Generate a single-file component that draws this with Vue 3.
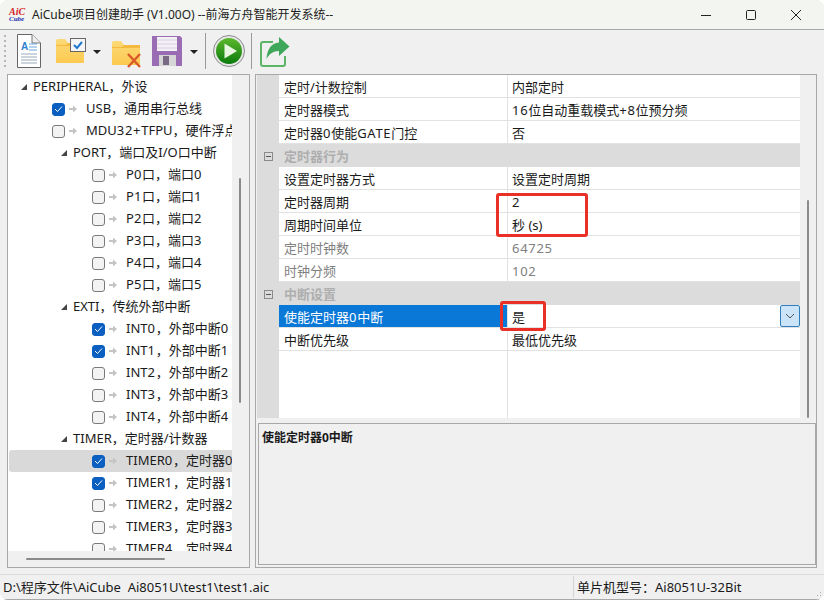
<script setup>
const C = '\uFF0C'
const tree = [
  { t: 'PERIPHERAL' + C + '外设', k: 'g0' },
  { t: 'USB' + C + '通用串行总线', k: 'i1', c: true },
  { t: 'MDU32+TFPU' + C + '硬件浮点运算', k: 'i1' },
  { t: 'PORT' + C + '端口及I/O口中断', k: 'g1' },
  { t: 'P0口' + C + '端口0', k: 'i2' },
  { t: 'P1口' + C + '端口1', k: 'i2' },
  { t: 'P2口' + C + '端口2', k: 'i2' },
  { t: 'P3口' + C + '端口3', k: 'i2' },
  { t: 'P4口' + C + '端口4', k: 'i2' },
  { t: 'P5口' + C + '端口5', k: 'i2' },
  { t: 'EXTI' + C + '传统外部中断', k: 'g1' },
  { t: 'INT0' + C + '外部中断0', k: 'i2', c: true },
  { t: 'INT1' + C + '外部中断1', k: 'i2', c: true },
  { t: 'INT2' + C + '外部中断2', k: 'i2' },
  { t: 'INT3' + C + '外部中断3', k: 'i2' },
  { t: 'INT4' + C + '外部中断4', k: 'i2' },
  { t: 'TIMER' + C + '定时器/计数器', k: 'g1' },
  { t: 'TIMER0' + C + '定时器0', k: 'i2', c: true, s: true },
  { t: 'TIMER1' + C + '定时器1', k: 'i2', c: true },
  { t: 'TIMER2' + C + '定时器2', k: 'i2' },
  { t: 'TIMER3' + C + '定时器3', k: 'i2' },
  { t: 'TIMER4' + C + '定时器4', k: 'i2' },
]
const props = [
  { n: '定时/计数控制', v: '内部定时' },
  { n: '定时器模式', v: '16位自动重载模式+8位预分频' },
  { n: '定时器0使能GATE门控', v: '否' },
  { g: '定时器行为' },
  { n: '设置定时器方式', v: '设置定时周期' },
  { n: '定时器周期', v: '2' },
  { n: '周期时间单位', v: '秒 (s)' },
  { n: '定时时钟数', v: '64725', dim: true },
  { n: '时钟分频', v: '102', dim: true },
  { g: '中断设置' },
  { n: '使能定时器0中断', v: '是', sel: true },
  { n: '中断优先级', v: '最低优先级' },
]
const chip = '单片机型号\uFF1AAi8051U-32Bit'
// Latin runs are set slightly wider than the fallback font
const runs = (s) => s.split(/([0-9A-Z+]+)/).filter(Boolean)
const isLatin = (s) => /^[0-9A-Z+]/.test(s)
const treeRuns = (s) => s.split(/([0-9+]+)/).filter(Boolean)
const isNum = (s) => /^[0-9+]/.test(s)
</script>

<template>
  <div class="win">
    <header class="title">
      <div class="logo"><span>AiC</span><span class="logo2">Cube</span></div>
      <div class="title-text">AiCube项目创建助手 (V1.00O) --前海方舟智能开发系统--</div>
      <div class="controls">
        <svg width="12" height="12" viewBox="0 0 12 12"><path d="M1 6.500H11" stroke="#222" fill="none"/></svg>
        <svg width="12" height="12" viewBox="0 0 12 12"><rect x="1.500" y="1.500" width="9" height="9" rx="1" stroke="#222" fill="none"/></svg>
        <svg width="12" height="12" viewBox="0 0 12 12"><path d="M1 1L11 11M11 1L1 11" stroke="#222" fill="none"/></svg>
      </div>
    </header>

    <nav class="toolbar">
      <div class="grip"></div>
      <svg class="ic doc" width="24" height="34" viewBox="0 0 24 34">
        <path d="M.5 .500H15L23.500 9V33.500H.5Z" fill="#fff" stroke="#666"/>
        <path d="M15 .500V9H23.500" fill="#eee" stroke="#777"/>
        <text x="4" y="16" font-size="10" font-weight="700" fill="#2f80d0" font-family="Liberation Sans">A</text>
        <path d="M12 10H20M12 13H20M12 16H20" stroke="#6aa5dd"/>
        <path d="M4 20H20M4 23H20M4 26H20M4 29H20" stroke="#9ab"/>
      </svg>
      <svg class="ic f1" width="31" height="26" viewBox="0 0 31 26">
        <path d="M0 3Q0 1 2 1H9L12 5H28V24Q28 25 27 25H1Q0 25 0 24Z" fill="url(#fd)"/>
        <path d="M0 8H28V5H12L10 7H0Z" fill="#f4b93e"/>
        <rect x="14.500" y=".5" width="15" height="13" fill="#f5f5f5" stroke="#666"/>
        <path d="M18 7L21 10L26 4" stroke="#1f78d1" stroke-width="2" fill="none"/>
        <defs><linearGradient id="fd" x1="0" y1="0" x2="0" y2="1"><stop offset="0" stop-color="#fbd977"/><stop offset="1" stop-color="#fcc94f"/></linearGradient></defs>
      </svg>
      <div class="drop d1"></div>
      <svg class="ic f2" width="30" height="28" viewBox="0 0 30 28">
        <path d="M0 3Q0 1 2 1H9L12 5H28V24Q28 25 27 25H1Q0 25 0 24Z" fill="url(#fd)"/>
        <path d="M0 8H28V5H12L10 7H0Z" fill="#f4b93e"/>
        <path d="M16 14L28 27M28 14L16 27" stroke="#d9592b" stroke-width="2.400" fill="none"/>
      </svg>
      <svg class="ic sv" width="30" height="30" viewBox="0 0 30 30">
        <path d="M0 0H28L30 2V30H0Z" fill="#9a6cb4"/>
        <rect x="5" y="1" width="20" height="14" fill="#f3f0f6"/>
        <path d="M5 4H25M5 8H25M5 12H25" stroke="#d8d0e0"/>
        <rect x="7" y="19" width="17" height="11" fill="#d6d6d6"/>
        <rect x="11" y="20" width="6" height="9" fill="#7b6a86"/>
      </svg>
      <div class="drop d2"></div>
      <div class="sep s1"></div>
      <svg class="ic run" width="32" height="32" viewBox="0 0 32 32">
        <circle cx="16" cy="16" r="15.500" fill="#e8e8e8" stroke="#8a8a8a"/>
        <circle cx="16" cy="16" r="13" fill="url(#gr)"/>
        <path d="M11.500 8.500L24 16L11.500 23.500Z" fill="#e8f5e0"/>
        <defs><linearGradient id="gr" x1="0" y1="0" x2="0" y2="1"><stop offset="0" stop-color="#5cb82c"/><stop offset="1" stop-color="#0a7a0c"/></linearGradient></defs>
      </svg>
      <div class="sep s2"></div>
      <svg class="ic sh" width="30" height="30" viewBox="0 0 30 30">
        <path d="M13 5H3Q1 5 1 7V27Q1 29 3 29H23Q25 29 25 27V19" fill="none" stroke="#5cb567" stroke-width="2"/>
        <path d="M19 0L29.500 9.500L19 19V14C13 14 9 17 6.500 22C7 13 11 6 19 5.500Z" fill="#3fa75a"/>
      </svg>
    </nav>

    <main class="body">
      <section class="tree-pane">
        <div class="tree-top">
          <div class="tree">
            <div v-for="r in tree" :key="r.t" class="row" :class="[r.k, { on: r.s }]">
              <i v-if="r.k[0] === 'g'" class="tri"></i>
              <template v-else>
                <span class="box" :class="{ checked: r.c }">
                  <svg v-if="r.c" width="9" height="8" viewBox="0 0 9 8"><path d="M1 4L3.500 6.500L8 1.500" stroke="#fff" fill="none"/></svg>
                </span>
                <svg class="arr" width="8" height="8" viewBox="0 0 8 8"><path d="M0 3H4V0.500L8 4L4 7.500V5H0Z" fill="#c4c4c4"/></svg>
              </template>
              <span class="lbl"><span v-for="(s, i) in treeRuns(r.t)" :key="i" :class="{ wide: isNum(s) }">{{ s }}</span></span>
            </div>
          </div>
          <div class="vbar"><div class="vthumb t1"></div></div>
        </div>
        <div class="hbar"><div class="hthumb"></div></div>
      </section>

      <section class="right-pane">
        <div class="grid-wrap">
          <div class="grid">
            <template v-for="p in props" :key="p.n || p.g">
              <div v-if="p.g" class="grow">
                <span class="minus"></span>
                <span class="gname">{{ p.g }}</span>
              </div>
              <div v-else class="prow" :class="{ dim: p.dim, sel: p.sel }">
                <div class="gut"></div>
                <div class="pn"><span v-for="(s, i) in runs(p.n)" :key="i" :class="{ wide: isLatin(s) }">{{ s }}</span></div>
                <div class="pv">
                  <span v-for="(s, i) in runs(p.v)" :key="i" :class="{ wide: isLatin(s) }">{{ s }}</span>
                  <span v-if="p.sel" class="combo"><svg width="10" height="6" viewBox="0 0 10 6"><path d="M1 1L5 5L9 1" stroke="#555" fill="none"/></svg></span>
                </div>
              </div>
            </template>
            <div class="prow fill"><div class="gut"></div><div class="pn"></div><div class="pv"></div></div>
            <div class="mark m1"></div>
            <div class="mark m2"></div>
          </div>
          <div class="vbar rb"><div class="vthumb t2"></div></div>
        </div>
        <div class="desc">使能定时器0中断</div>
      </section>
    </main>

    <footer class="status">
      <div class="st-l">D:\程序文件\AiCube&nbsp;&nbsp;Ai8051U\test1\test1.aic</div>
      <div class="st-r">{{ chip }}</div>
      <div class="sizer"></div>
    </footer>
  </div>
</template>

<style>
html, body { margin: 0; background: #fff; }
</style>

<style scoped>
.win {
  width: 824px; height: 600px; display: flex; flex-direction: column; overflow: hidden;
  background: #f0f0f0; color: #1a1a1a;
  font-family: "Noto Sans", "Noto Sans CJK SC", sans-serif; font-size: 13px; line-height: 18px;
  border-radius: 8px;
}
.title {
  height: 29px; flex: none; display: flex; align-items: center; background: #f3f5f0;
  border-bottom: 1px solid #a8a8a8; position: relative;
}
.logo { width: 32px; padding-left: 9px; box-sizing: border-box; display: flex; flex-direction: column; font-family: "Liberation Serif", serif; font-style: italic; font-weight: 700; color: #d3232a; font-size: 10px; line-height: 9px; }
.logo2 { color: #2230b0; font-size: 7px; line-height: 7px; }
.title-text { flex: 1; white-space: nowrap; color: #222; font-size: 12px; }
.controls { display: flex; gap: 33px; margin-right: 22px; }
.toolbar { height: 44px; flex: none; position: relative; background: #f0f0f0; }
.grip { position: absolute; left: 4px; top: 5px; width: 2px; height: 34px; background: repeating-linear-gradient(#b5b5b5 0 2px, transparent 2px 5px); }
.ic { position: absolute; }
.doc { left: 17px; top: 4px; }
.f1 { left: 56px; top: 8px; }
.f2 { left: 112px; top: 10px; }
.sv { left: 152px; top: 6px; }
.run { left: 213px; top: 5px; }
.sh { left: 260px; top: 7px; }
.drop { position: absolute; top: 20px; border: 4px solid transparent; border-top: 4px solid #222; border-bottom: 0; }
.d1 { left: 93px; }
.d2 { left: 190px; }
.sep { position: absolute; top: 3px; width: 1px; height: 36px; background: #9a9a9a; }
.s1 { left: 205px; }
.s2 { left: 251px; }
.body { flex: 1; min-height: 0; display: flex; gap: 5px; padding: 0 7px 6px 7px; }
.tree-pane {
  width: 243px; box-sizing: border-box; border: 1px solid #a8a8a8; display: flex; flex-direction: column; background: #f0f0f0;
}
.tree-top { flex: 1; min-height: 0; display: flex; overflow: hidden; }
.tree { flex: 1; min-width: 0; background: #fff; padding: 1px 0 0 1px; overflow: hidden; }
.row { height: 22px; display: flex; align-items: center; white-space: nowrap; position: relative; overflow: hidden; }
.row.on { background: #d9d9d9; border-radius: 3px 0 0 3px; }
.g0 { padding-left: 12px; }
.g1 { padding-left: 52px; }
.i1 { padding-left: 43px; }
.i2 { padding-left: 83px; }
.lbl { padding-bottom: 2px; }
.tri { width: 0; height: 0; border-style: solid; border-width: 0 0 6px 6px; border-color: transparent transparent #444 transparent; margin-right: 6px; flex: none; }
.box { width: 13px; height: 13px; box-sizing: border-box; border: 1px solid #7a7a7a; border-radius: 3px; background: #f3f3f3; flex: none; display: flex; align-items: center; justify-content: center; }
.box.checked { background: #0a5fc0; border-color: #0a5fc0; }
.arr { margin: 0 9px 0 4px; flex: none; }
.vbar { width: 17px; flex: none; background: #f0f0f0; position: relative; }
.rb { width: 16px; }
.vthumb { position: absolute; left: 7px; width: 2px; background: #8a8a8a; border-radius: 1px; }
.t1 { top: 103px; height: 225px; }
.t2 { top: 125px; height: 218px; }
.hbar { height: 16px; flex: none; position: relative; }
.hthumb { position: absolute; left: 18px; top: 7px; width: 139px; height: 2px; background: #8a8a8a; border-radius: 1px; }
.right-pane {
  flex: 1; min-width: 0; box-sizing: border-box; border: 1px solid #a8a8a8; display: flex; flex-direction: column; gap: 5px; padding-bottom: 2px;
}
.grid-wrap { height: 343px; flex: none; display: flex; overflow: hidden; }
.grid { flex: 1; min-width: 0; background: #fff; position: relative; margin-left: 1px; display: flex; flex-direction: column; }
.prow { height: 23px; flex: none; box-sizing: border-box; display: flex; border-bottom: 1px solid #e2e2e2; }
.gut { width: 22px; flex: none; background: #dcdcdc; margin-bottom: -1px; }
.pn { width: 228px; flex: none; box-sizing: border-box; padding-left: 5px; line-height: 24px; white-space: nowrap; overflow: hidden; }
.pv { flex: 1; border-left: 1px solid #e2e2e2; padding-left: 4px; line-height: 24px; position: relative; white-space: nowrap; overflow: hidden; }
.wide { letter-spacing: .7px; }
.dim .pn, .dim .pv { color: #808080; }
.sel .pn { background: #0a78d7; color: #fff; }
.combo { position: absolute; right: 0; top: 0; width: 20px; height: 22px; box-sizing: border-box; background: #cce4f7; border: 1px solid #2f7fc0; border-radius: 2px; display: flex; align-items: center; justify-content: center; }
.grow { height: 23px; flex: none; box-sizing: border-box; padding-top: 1px; background: #dcdcdc; display: flex; align-items: center; color: #aeaeae; font-weight: 700; }
.minus { width: 9px; height: 9px; box-sizing: border-box; border: 1px solid #8a8a8a; margin: 0 11px 0 7px; flex: none; position: relative; }
.minus::after { content: ""; position: absolute; left: 1px; right: 1px; top: 3px; height: 1px; background: #555; }
.fill { flex: 1; border: 0; }
.mark { position: absolute; border: 3px solid #ea2f27; border-radius: 3px; box-sizing: border-box; }
.m1 { left: 239px; top: 118px; width: 92px; height: 44px; }
.m2 { left: 243px; top: 226px; width: 46px; height: 30px; }
.desc {
  flex: 1; margin: 0 0 0 2px; box-sizing: border-box; border: 1px solid #a8a8a8; padding: 5px 3px; font-weight: 700; font-size: 12px; color: #1a1a1a;
}
.status { height: 26px; flex: none; box-sizing: border-box; border-top: 1px solid #dcdcdc; display: flex; align-items: center; position: relative; background: #f0f0f0; border-bottom: 1px solid #a8a8a8; }
.st-l { width: 573px; padding-left: 3px; box-sizing: border-box; white-space: nowrap; }
.st-r { border-left: 1px solid #d4d4d4; padding-left: 3px; height: 22px; line-height: 22px; white-space: nowrap; }
.sizer { position: absolute; right: 1px; bottom: 1px; width: 10px; height: 10px; background: radial-gradient(circle, #b0b0b0 1px, transparent 1px) 0 0 / 3px 3px; clip-path: polygon(100% 0, 100% 100%, 0 100%); }
</style>
